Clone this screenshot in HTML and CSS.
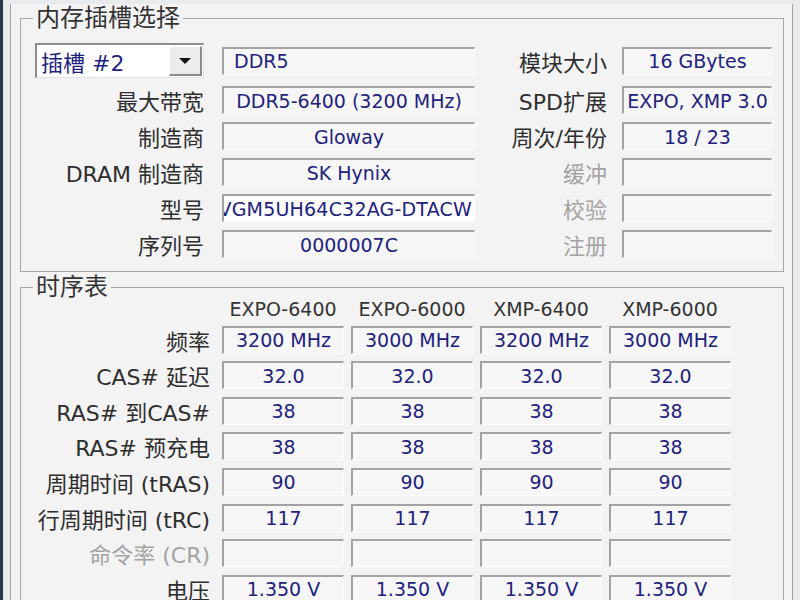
FILE: index.html
```html
<!DOCTYPE html>
<html lang="zh-CN">
<head>
    <meta charset="UTF-8">
    <meta name="viewport" content="width=device-width, initial-scale=1.0">
    <title>SPD</title>
    <link rel="stylesheet" href="styles.css">
</head>
<body>
    <div class="tabpage">
        <fieldset class="group">
            <legend>内存插槽选择</legend>
            <div class="slot-grid">
                <div class="select">
                    <span class="select-text">插槽 #2</span>
                    <span class="select-btn"><span class="arrow"></span></span>
                </div>
                <div class="box left">DDR5</div>
                <div class="label right">模块大小</div>
                <div class="box">16 GBytes</div>

                <div class="label">最大带宽</div>
                <div class="box">DDR5-6400 (3200 MHz)</div>
                <div class="label right">SPD扩展</div>
                <div class="box">EXPO, XMP 3.0</div>

                <div class="label">制造商</div>
                <div class="box">Gloway</div>
                <div class="label right">周次/年份</div>
                <div class="box">18 / 23</div>

                <div class="label">DRAM 制造商</div>
                <div class="box">SK Hynix</div>
                <div class="label right off">缓冲</div>
                <div class="box"></div>

                <div class="label">型号</div>
                <div class="box clip">VGM5UH64C32AG-DTACW</div>
                <div class="label right off">校验</div>
                <div class="box"></div>

                <div class="label">序列号</div>
                <div class="box">0000007C</div>
                <div class="label right off">注册</div>
                <div class="box"></div>
            </div>
        </fieldset>

        <fieldset class="group timings">
            <legend>时序表</legend>
            <div class="timing-grid">
                <div></div>
                <div class="head">EXPO-6400</div>
                <div class="head">EXPO-6000</div>
                <div class="head">XMP-6400</div>
                <div class="head">XMP-6000</div>

                <div class="label">频率</div>
                <div class="box">3200 MHz</div>
                <div class="box">3000 MHz</div>
                <div class="box">3200 MHz</div>
                <div class="box">3000 MHz</div>

                <div class="label">CAS# 延迟</div>
                <div class="box">32.0</div>
                <div class="box">32.0</div>
                <div class="box">32.0</div>
                <div class="box">32.0</div>

                <div class="label">RAS# 到CAS#</div>
                <div class="box">38</div>
                <div class="box">38</div>
                <div class="box">38</div>
                <div class="box">38</div>

                <div class="label">RAS# 预充电</div>
                <div class="box">38</div>
                <div class="box">38</div>
                <div class="box">38</div>
                <div class="box">38</div>

                <div class="label">周期时间 (tRAS)</div>
                <div class="box">90</div>
                <div class="box">90</div>
                <div class="box">90</div>
                <div class="box">90</div>

                <div class="label">行周期时间 (tRC)</div>
                <div class="box">117</div>
                <div class="box">117</div>
                <div class="box">117</div>
                <div class="box">117</div>

                <div class="label off">命令率 (CR)</div>
                <div class="box"></div>
                <div class="box"></div>
                <div class="box"></div>
                <div class="box"></div>

                <div class="label">电压</div>
                <div class="box">1.350 V</div>
                <div class="box">1.350 V</div>
                <div class="box">1.350 V</div>
                <div class="box">1.350 V</div>
            </div>
        </fieldset>
    </div>
</body>
</html>
```

FILE: styles.css
```css
body {
    margin: 0;
    height: 600px;
    overflow: hidden;
    background-color: #e9eaec;
    border-left: 3px solid #2b3550;
    font-family: "DejaVu Sans", "Noto Sans CJK SC", sans-serif;
    color: #2e2e2e;
}
.tabpage {
    margin-left: 7px;
    width: 783px;
    height: 600px;
    box-sizing: border-box;
    padding: 0 8px 0 9px;
    background-color: #f3f3f3;
    border-left: 1px solid #a2a2a2;
    border-right: 1px solid #a2a2a2;
}
.group {
    margin: 4px 0 0;
    padding: 11px 10px 13px 0;
    border: 1px solid #a6a6a6;
    min-width: 0;
}
.group legend {
    margin-left: 12px;
    padding: 0 3px;
    font-size: 24px;
    line-height: 28px;
    color: #333;
}
.timings {
    margin-top: 1px;
    padding: 0 10px 20px 0;
}
.slot-grid {
    display: grid;
    grid-template-columns: 201px 253px 147px 150px;
    grid-template-rows: 35px;
    grid-auto-rows: 28px;
    row-gap: 8px;
}
.timing-grid {
    display: grid;
    grid-template-columns: 194px repeat(4, 122px);
    grid-template-rows: 17px;
    grid-auto-rows: 28px;
    column-gap: 7px;
    row-gap: 7.6px;
}
.select {
    width: 169px;
    height: 35px;
    margin-left: 14px;
    box-sizing: border-box;
    display: flex;
    background-color: #fff;
    border-top: 2px solid #8d8d8d;
    border-left: 2px solid #8d8d8d;
    border-right: 1px solid #e2e2e2;
    border-bottom: 1px solid #e2e2e2;
}
.select-text {
    flex: 1;
    display: flex;
    align-items: center;
    padding-left: 4px;
    font-size: 22px;
    color: #1f1f7e;
    white-space: nowrap;
}
.select-btn {
    width: 30px;
    margin: 1px 1px 1px 0;
    display: flex;
    align-items: center;
    justify-content: center;
    background-color: #ececec;
    border-top: 1px solid #fff;
    border-left: 1px solid #fff;
    border-right: 2px solid #8a8a8a;
    border-bottom: 2px solid #8a8a8a;
}
.arrow {
    width: 0;
    height: 0;
    border-left: 6px solid transparent;
    border-right: 6px solid transparent;
    border-top: 6px solid #111;
}
.box {
    box-sizing: border-box;
    height: 28px;
    align-self: center;
    display: flex;
    align-items: center;
    justify-content: center;
    overflow: hidden;
    white-space: nowrap;
    font-size: 19px;
    color: #22227c;
    background-color: #f6f6f6;
    border-top: 2px solid #a3a3a3;
    border-left: 2px solid #a3a3a3;
    border-right: 1px solid #fdfdfd;
    border-bottom: 1px solid #fdfdfd;
}
.box.left {
    justify-content: flex-start;
    padding-left: 10px;
}
.box.clip {
    justify-content: flex-end;
    padding-right: 2px;
    letter-spacing: 0.2px;
    background-color: #fcfcfc;
}
.label {
    display: flex;
    align-items: center;
    justify-content: flex-end;
    padding-right: 18px;
    font-size: 22px;
    white-space: nowrap;
}
.label.right {
    padding-right: 15px;
}
.timing-grid .label {
    padding-right: 5px;
}
.label.off {
    color: #a3a3a3;
}
.head {
    font-size: 19px;
    line-height: 16px;
    text-align: center;
    color: #333;
}
```
